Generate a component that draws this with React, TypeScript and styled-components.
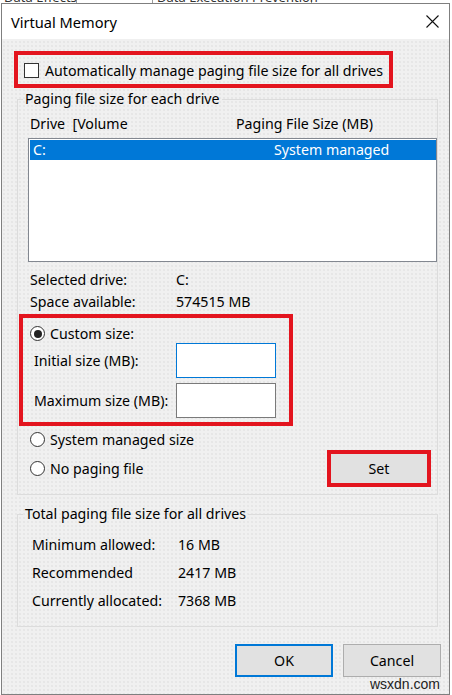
import React from "react";
import styled, { createGlobalStyle } from "styled-components";

const GlobalStyle = createGlobalStyle`
  html, body {
    margin: 0;
    padding: 0;
    background: #ffffff;
  }
  body {
    font-family: "Noto Sans", "Open Sans", sans-serif;
    font-size: 14.2px;
    color: #000;
  }
`;

const Page = styled.div`
  position: relative;
  width: 452px;
  height: 695px;
  overflow: hidden;
  background: #ffffff;
`;

const BackStrip = styled.div`
  height: 3px;
  overflow: hidden;
  display: flex;
  font-size: 13px;
  line-height: 12px;
  color: #333;
`;

const BackTab = styled.div<{ $w: number }>`
  width: ${(p) => p.$w}px;
  margin-top: -9px;
  padding-left: 4px;
  border-right: 1px solid #9a9a9a;
  white-space: nowrap;
`;

const Window = styled.div`
  margin-left: 1px;
  width: 449px;
  height: 692px;
  box-sizing: border-box;
  border: 1px solid #7f7f7f;
  display: flex;
  flex-direction: column;
  background-color: #f0f0f0;
  background-image: radial-gradient(#e6e6e6 0.7px, transparent 0.8px);
  background-size: 4px 4px;
`;

const TitleBar = styled.div`
  height: 35px;
  flex: none;
  background: #ffffff;
  display: flex;
  align-items: center;
  justify-content: space-between;
  padding: 0 10px 0 9px;
`;

const Title = styled.span`
  font-size: 14.6px;
  line-height: 20px;
`;

const CloseIcon = () => (
  <svg width="13" height="13" viewBox="0 0 13 13">
    <path d="M0.5 0.5 L12.5 12.5 M12.5 0.5 L0.5 12.5" stroke="#111" strokeWidth="1.1" fill="none" />
  </svg>
);

const Highlight = styled.div<{ $w: number; $h: number }>`
  box-sizing: border-box;
  width: ${(p) => p.$w}px;
  height: ${(p) => p.$h}px;
  border: 4px solid #e3141e;
`;

const AutoBox = styled(Highlight)`
  margin: 12px 0 0 12px;
  display: flex;
  align-items: center;
  gap: 6px;
  padding: 2px 0 0 6px;
  white-space: nowrap;
`;

const Checkbox = styled.span`
  width: 15px;
  height: 15px;
  box-sizing: border-box;
  border: 1px solid #333;
  background: #fff;
  flex: none;
`;

const Group = styled.fieldset<{ $top: number }>`
  margin: ${(p) => p.$top}px 0 0 15px;
  width: 421px;
  box-sizing: border-box;
  border: 1px solid #dcdcdc;
  padding: 0;
  min-width: 0;
`;

const Legend = styled.legend`
  margin-left: 5px;
  padding: 0 2px;
  line-height: 20px;
`;

const ColumnHeader = styled.div`
  display: grid;
  grid-template-columns: 206px 1fr;
  margin-top: 5px;
  padding-left: 12px;
  line-height: 20px;
  white-space: pre;
`;

const DriveList = styled.div`
  margin: 4px 0 0 10px;
  width: 409px;
  height: 124px;
  box-sizing: border-box;
  border: 1px solid #828790;
  background: #fff;
  padding: 1px 0 1px 1px;
`;

const DriveRow = styled.div<{ $selected?: boolean }>`
  display: grid;
  grid-template-columns: 241px 1fr;
  height: 20px;
  line-height: 20px;
  padding-left: 3px;
  background: ${(p) => (p.$selected ? "#0078d7" : "transparent")};
  color: ${(p) => (p.$selected ? "#fff" : "#000")};
`;

const InfoRow = styled.div<{ $h: number; $pad: number; $label: number }>`
  display: grid;
  grid-template-columns: ${(p) => p.$label}px 1fr;
  height: ${(p) => p.$h}px;
  align-items: center;
  padding-left: ${(p) => p.$pad}px;
`;

const InfoBlock = styled.div<{ $top: number }>`
  margin-top: ${(p) => p.$top}px;
`;

const CustomBox = styled(Highlight)`
  margin: 2px 0 0 1px;
  padding: 6px 0 0 0;
`;

const RadioRow = styled.label<{ $h: number; $pad: number }>`
  display: flex;
  align-items: center;
  gap: 5px;
  height: ${(p) => p.$h}px;
  padding-left: ${(p) => p.$pad}px;
`;

const Radio = styled.span<{ $checked?: boolean }>`
  width: 15px;
  height: 15px;
  box-sizing: border-box;
  border-radius: 50%;
  border: 1px solid #333;
  background: #fff;
  flex: none;
  display: flex;
  align-items: center;
  justify-content: center;
  &::after {
    content: "";
    width: 8px;
    height: 8px;
    border-radius: 50%;
    background: ${(p) => (p.$checked ? "#222" : "transparent")};
  }
`;

const SizeRow = styled.div<{ $top: number }>`
  display: grid;
  grid-template-columns: 142px 100px;
  align-items: center;
  margin-top: ${(p) => p.$top}px;
  padding-left: 11px;
`;

const SizeInput = styled.input<{ $focused?: boolean }>`
  width: 100px;
  height: 35px;
  box-sizing: border-box;
  margin: 0;
  border: 1px solid ${(p) => (p.$focused ? "#0078d7" : "#7a7a7a")};
  background: #fff;
  outline: none;
  font: inherit;
`;

const BottomRow = styled.div`
  display: flex;
  align-items: center;
  padding: 0 6px 7px 0;
`;

const SetBox = styled(Highlight)`
  margin-left: auto;
  display: flex;
`;

const Button = styled.button<{ $default?: boolean }>`
  box-sizing: border-box;
  margin: 0;
  font: inherit;
  color: #000;
  background: #e1e1e1;
  border: ${(p) => (p.$default ? "2px solid #0078d7" : "1px solid #adadad")};
  padding: 0;
`;

const SetButton = styled(Button)`
  flex: 1;
  border: none;
`;

const Totals = styled.div`
  margin-top: 6px;
  padding-bottom: 12px;
`;

const Footer = styled.div`
  display: flex;
  justify-content: flex-end;
  gap: 10px;
  margin-top: 17px;
  padding-right: 8px;
`;

const DialogButton = styled(Button)`
  width: 98px;
  height: 33px;
`;

const Watermark = styled.span`
  position: absolute;
  right: 12px;
  bottom: 3px;
  font-family: "Liberation Sans", Arial, sans-serif;
  font-size: 14px;
  line-height: 15px;
  color: #222;
`;

export default function App() {
  return (
    <>
      <GlobalStyle />
      <Page>
        <BackStrip>
          <BackTab $w={72}>Data Effects</BackTab>
          <BackTab $w={71}> </BackTab>
          <BackTab $w={154}>Data Execution Prevention</BackTab>
        </BackStrip>
        <Window>
          <TitleBar>
            <Title>Virtual Memory</Title>
            <CloseIcon />
          </TitleBar>

          <AutoBox $w={379} $h={37}>
            <Checkbox />
            <span>Automatically manage paging file size for all drives</span>
          </AutoBox>

          <Group $top={1}>
            <Legend>Paging file size for each drive</Legend>
            <ColumnHeader>
              <span>Drive  [Volume</span>
              <span>Paging File Size (MB)</span>
            </ColumnHeader>
            <DriveList>
              <DriveRow $selected>
                <span>C:</span>
                <span>System managed</span>
              </DriveRow>
            </DriveList>

            <InfoBlock $top={6}>
              <InfoRow $h={22} $pad={12} $label={146}>
                <span>Selected drive:</span>
                <span>C:</span>
              </InfoRow>
              <InfoRow $h={22} $pad={12} $label={146}>
                <span>Space available:</span>
                <span>574515 MB</span>
              </InfoRow>
            </InfoBlock>

            <CustomBox $w={274} $h={112}>
              <RadioRow $h={19} $pad={7}>
                <Radio $checked />
                Custom size:
              </RadioRow>
              <SizeRow $top={0}>
                <span>Initial size (MB):</span>
                <SizeInput $focused />
              </SizeRow>
              <SizeRow $top={5}>
                <span>Maximum size (MB):</span>
                <SizeInput />
              </SizeRow>
            </CustomBox>

            <InfoBlock $top={2}>
              <RadioRow $h={22} $pad={12}>
                <Radio />
                System managed size
              </RadioRow>
            </InfoBlock>
            <BottomRow>
              <RadioRow $h={37} $pad={12}>
                <Radio />
                No paging file
              </RadioRow>
              <SetBox $w={104} $h={37}>
                <SetButton>Set</SetButton>
              </SetBox>
            </BottomRow>
          </Group>

          <Group $top={9}>
            <Legend>Total paging file size for all drives</Legend>
            <Totals>
              <InfoRow $h={28} $pad={14} $label={146}>
                <span>Minimum allowed:</span>
                <span>16 MB</span>
              </InfoRow>
              <InfoRow $h={28} $pad={14} $label={146}>
                <span>Recommended</span>
                <span>2417 MB</span>
              </InfoRow>
              <InfoRow $h={28} $pad={14} $label={146}>
                <span>Currently allocated:</span>
                <span>7368 MB</span>
              </InfoRow>
            </Totals>
          </Group>

          <Footer>
            <DialogButton $default>OK</DialogButton>
            <DialogButton>Cancel</DialogButton>
          </Footer>
        </Window>
        <Watermark>wsxdn.com</Watermark>
      </Page>
    </>
  );
}
